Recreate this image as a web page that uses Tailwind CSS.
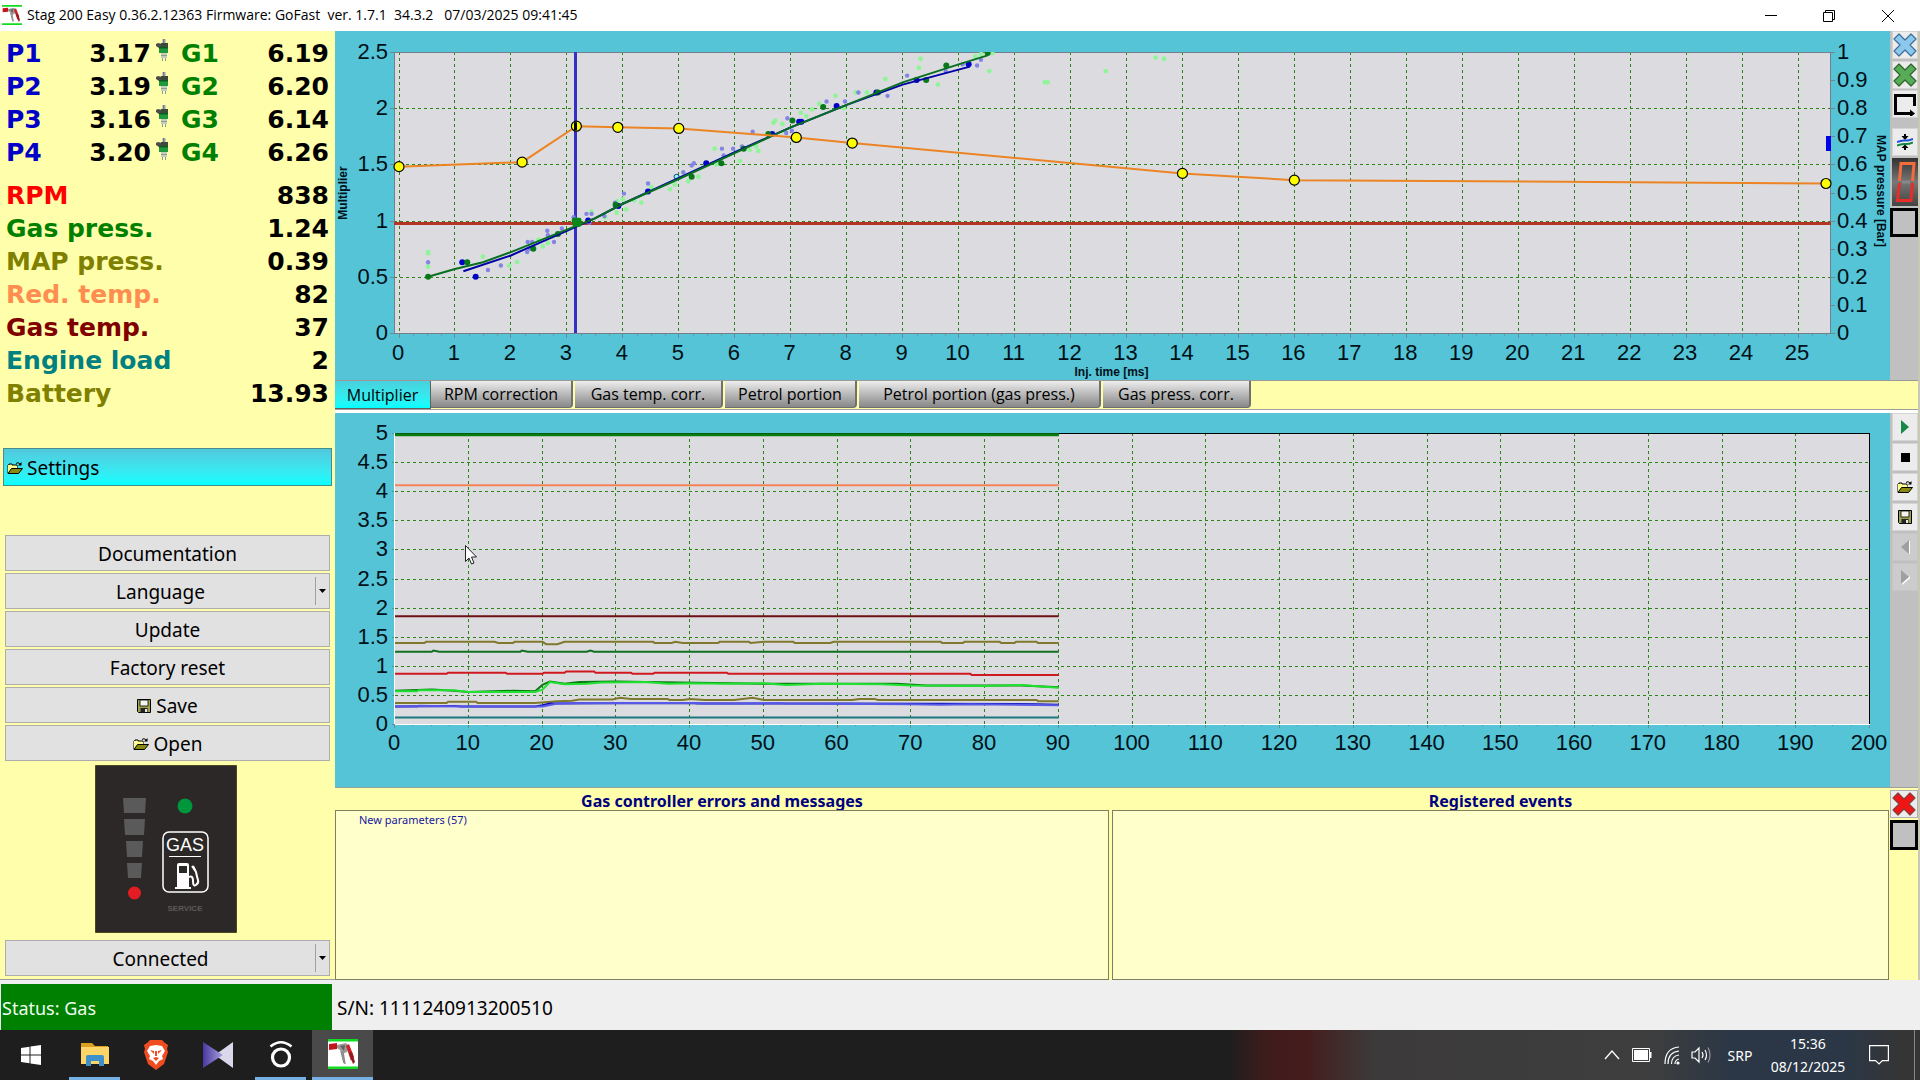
<!DOCTYPE html>
<html lang="en">
<head>
<meta charset="utf-8">
<title>Stag 200 Easy</title>
<script src="https://cdn.jsdelivr.net/npm/@tailwindcss/browser@4"></script>
</head>
<body class="bg-[#ffffab] text-black">

<svg width="0" height="0" class="hidden">
  <symbol id="folder" viewBox="0 0 16 14">
    <path d="M1 12V4h1V3h3v1h5v3" fill="#ffffa0" stroke="#000"/>
    <path d="M1 12V4h4v1h5v2H4z" fill="#ffff90"/>
    <path d="M1 12.5 4.500 7.500H15.500L11.500 12.500Z" fill="#8a8a10" stroke="#000"/>
    <path d="M9 2.500q2-2 4 .5" fill="none" stroke="#000"/><path d="M14.500 1v3.500H11z" fill="#000"/>
  </symbol>
  <symbol id="floppy" viewBox="0 0 14 14">
    <path d="M.5.5h13v13H1.500l-1-1z" fill="#a0a050" stroke="#000"/>
    <path d="M3 1h8v6H3z" fill="#f4f4ec" stroke="#000" stroke-width=".8"/>
    <path d="M3.500 9h7v4.500h-7z" fill="#222"/><path d="M8 10h2v3H8z" fill="#e8e8e8"/>
  </symbol>
  <symbol id="injector" viewBox="0 0 13 22">
    <path d="M6 0h4v5H6z" fill="#c9c9c0"/><path d="M7 0h1.500v4H7z" fill="#777"/>
    <path d="M0 5l2-1 4 1v4H3L0 7z" fill="#4a4a48"/><path d="M5 4h7v4H5z" fill="#3c4a3c"/>
    <path d="M3 8h9v6H3z" fill="#1e9a3c"/><path d="M3 8h9v1.500H3z" fill="#0c5c20"/>
    <path d="M5 14h6v5H5z" fill="#c4ccc4"/><path d="M5 16h6v1H5zM6 19h1v3H6zM9 19h1v3H9z" fill="#8aa08a"/>
  </symbol>
  <symbol id="cross" viewBox="0 0 24 24">
    <path d="M6 1l6 6 6-6 5 5-6 6 6 6-5 5-6-6-6 6-5-5 6-6-6-6z" stroke-width="1.200" stroke-linejoin="round"/>
  </symbol>
  <symbol id="stag" viewBox="0 0 30 30">
    <path d="M0 0h30v30H0z" fill="#fff"/><path d="M0 0h30v2.500H0zM0 27.500h30V30H0z" fill="#12dc22"/>
    <path d="M1 5l8-1v6l-8 1z" fill="#c4141c"/><path d="M9 6l9-2 3 3-2 6-5 2-2-4-3-2z" fill="#9a9a98"/>
    <path d="M12 7l5-1-1 6z" fill="#62625e"/><path d="M15 13l2 12M13 12l3 12" stroke="#8c8c88" stroke-width="1.500"/>
    <path d="M18 7l3-2 5 13-3 4z" fill="#cc2028"/><path d="M21 14l3-1 3 10-2 2z" fill="#8e1c20"/>
  </symbol>
</svg>

<div class="flex min-h-screen flex-col bg-[#ffffab] font-['Noto_Sans','Open_Sans',sans-serif]">

  <header class="flex h-[31px] items-center bg-white">
    <svg class="ml-[2px] mb-[2px] h-5 w-5"><use href="#stag"/></svg>
    <h1 class="mb-[2px] ml-[5px] flex-1 whitespace-pre font-['Open_Sans',sans-serif] text-[14px] leading-5">Stag 200 Easy 0.36.2.12363 Firmware: GoFast  ver. 1.7.1  34.3.2   07/03/2025 09:41:45</h1>
    <button aria-label="Minimize" class="flex h-7 w-[58px] items-center justify-center"><svg width="12" height="12" stroke="#000"><path d="M0 5.500h12"/></svg></button>
    <button aria-label="Restore" class="flex h-7 w-[58px] items-center justify-center"><svg width="12" height="12" fill="none" stroke="#000"><path d="M.5 2.500h9v9h-9zM2.500 2.500v-2h9v9h-2"/></svg></button>
    <button aria-label="Close" class="mr-[2px] flex h-7 w-[60px] items-center justify-center"><svg width="12" height="12" stroke="#000"><path d="M0 0l12 12M12 0L0 12"/></svg></button>
  </header>

  <main class="flex flex-1">
    <aside class="flex w-[335px] shrink-0 flex-col border-b border-[#a0a0a0] pr-1 pl-[3px]">
      <section aria-label="Live readings" class="pt-[6px] pr-[2px] pl-[3px] font-['DejaVu_Sans',sans-serif] text-[25px] leading-[33px] font-bold">
        <div class="grid grid-cols-[145px_30px_1fr]">
          <p class="flex justify-between text-[#0000c8]">P1<span class="text-black">3.17</span></p><svg class="ml-[5px] mt-[2px] h-[22px] w-[13px]"><use href="#injector"/></svg><p class="flex justify-between text-[#008000]">G1<span class="text-black">6.19</span></p>
          <p class="flex justify-between text-[#0000c8]">P2<span class="text-black">3.19</span></p><svg class="ml-[5px] mt-[2px] h-[22px] w-[13px]"><use href="#injector"/></svg><p class="flex justify-between text-[#008000]">G2<span class="text-black">6.20</span></p>
          <p class="flex justify-between text-[#0000c8]">P3<span class="text-black">3.16</span></p><svg class="ml-[5px] mt-[2px] h-[22px] w-[13px]"><use href="#injector"/></svg><p class="flex justify-between text-[#008000]">G3<span class="text-black">6.14</span></p>
          <p class="flex justify-between text-[#0000c8]">P4<span class="text-black">3.20</span></p><svg class="ml-[5px] mt-[2px] h-[22px] w-[13px]"><use href="#injector"/></svg><p class="flex justify-between text-[#008000]">G4<span class="text-black">6.26</span></p>
        </div>
        <div class="mt-[10px]">
          <p class="flex justify-between text-[#ff0000]">RPM<span class="text-black">838</span></p>
          <p class="flex justify-between text-[#008000]">Gas press.<span class="text-black">1.24</span></p>
          <p class="flex justify-between text-[#808000]">MAP press.<span class="text-black">0.39</span></p>
          <p class="flex justify-between text-[#ff8c50]">Red. temp.<span class="text-black">82</span></p>
          <p class="flex justify-between text-[#800000]">Gas temp.<span class="text-black">37</span></p>
          <p class="flex justify-between text-[#008080]">Engine load<span class="text-black">2</span></p>
          <p class="flex justify-between text-[#808000]">Battery<span class="text-black">13.93</span></p>
        </div>
      </section>

      <button class="mt-[38px] flex h-[38px] w-[329px] items-center gap-1 border border-[#4a8a8a] bg-linear-to-b from-[#50c8dc] to-[#00ffff] pt-[2px] pl-[3px] text-[19px]"><svg class="h-[14px] w-4"><use href="#folder"/></svg>Settings</button>

      <div class="mt-[49px] ml-[2px] flex w-[325px] flex-col gap-[2px] text-[19px]">
        <button class="h-9 border border-[#adadad] bg-[#e1e1e1] pt-[2px]">Documentation</button>
        <div class="flex h-9 border border-[#adadad] bg-[#e1e1e1]">
          <button class="flex-1 pt-[2px]">Language</button>
          <button aria-label="Choose language" class="my-[3px] flex w-[14px] items-center justify-center border-l border-[#a0a0a0]"><svg width="7" height="4"><path d="M0 0h7L3.500 4z"/></svg></button>
        </div>
        <button class="h-9 border border-[#adadad] bg-[#e1e1e1] pt-[2px]">Update</button>
        <button class="h-9 border border-[#adadad] bg-[#e1e1e1] pt-[2px]">Factory reset</button>
        <button class="flex h-9 items-center justify-center gap-[5px] border border-[#adadad] bg-[#e1e1e1] pt-[2px]"><svg class="h-[14px] w-[14px]"><use href="#floppy"/></svg>Save</button>
        <button class="flex h-9 items-center justify-center gap-[5px] border border-[#adadad] bg-[#e1e1e1] pt-[2px]"><svg class="h-[14px] w-4"><use href="#folder"/></svg>Open</button>
      </div>

      <svg class="mt-1 ml-[92px] h-[168px] w-[142px]" viewBox="0 0 142 168" role="img" aria-label="Gas switch">
        <path d="M.5.5h141v167H.5z" fill="#2b2827" stroke="#4a4a20"/>
        <path d="M28 33h23l-1 15H29zM29 54h21l-1 16H30zM31 76h17l-1 16H32zM32 98h15l-1 15H33z" fill="#5a5a5a"/>
        <circle cx="90" cy="41" r="7.500" fill="#00963c"/><circle cx="39.500" cy="128" r="6.500" fill="#e41c24"/>
        <rect x="68" y="67" width="45" height="60" rx="6" fill="none" stroke="#fff" stroke-width="1.500"/>
        <text x="90" y="86" text-anchor="middle" font-family="Liberation Sans" font-size="18" fill="#fff">GAS</text>
        <path d="M74 91.500h32" stroke="#fff"/>
        <path d="M82 100q0-2 2-2h8q2 0 2 2v22h2v2H80v-2h2z" fill="#fff"/><path d="M84 101h8v7h-8z" fill="#2b2827"/>
        <path d="M94 112q4-2 4 4t3 4 2-5-2-8l-4-6M98 101l3 6" fill="none" stroke="#fff" stroke-width="2"/>
        <text x="90" y="146" text-anchor="middle" font-family="Liberation Sans" font-size="8" font-weight="bold" fill="#5c5a58">SERVICE</text>
      </svg>

      <div class="mt-[7px] ml-[2px] flex h-9 w-[325px] border border-[#adadad] bg-[#e1e1e1] text-[19px]">
        <button class="flex-1 pt-[2px]">Connected</button>
        <button aria-label="Connection options" class="my-[3px] flex w-[14px] items-center justify-center border-l border-[#a0a0a0]"><svg width="7" height="4"><path d="M0 0h7L3.500 4z"/></svg></button>
      </div>
    </aside>

    <div class="flex min-w-0 flex-1 flex-col border-r-2 border-[#c8c8b4]">
      <div class="flex h-[349px]">
        <svg id="map" class="block h-full min-w-0 flex-1 bg-[#54c4d6]" role="img" aria-label="Multiplier chart"></svg>
        <div class="flex w-7 flex-col items-end bg-[#c0c0c0]">
          <button aria-label="Clear petrol map" class="flex h-7 w-[26px] items-center justify-center border border-[#d4d4d4] bg-[#ececec]"><svg class="h-6 w-6 fill-[#8cc8ec] stroke-[#3c6c9c]"><use href="#cross"/></svg></button>
          <button aria-label="Clear gas map" class="mt-[2px] flex h-7 w-[26px] items-center justify-center border border-[#d4d4d4] bg-[#ececec]"><svg class="h-6 w-6 fill-[#58ac58] stroke-[#2c642c]"><use href="#cross"/></svg></button>
          <button aria-label="Rotate" class="mt-px flex h-7 w-[26px] items-center justify-center border border-[#d4d4d4] bg-[#ececec]"><svg width="24" height="24" fill="none" stroke="#000" stroke-width="3"><path d="M21.500 14V3.500h-19v18H18"/><path d="M17 17.500l5 4-5 4z" fill="#000" stroke="none"/></svg></button>
          <button aria-label="Fit curves" class="mt-[10px] flex h-7 w-[26px] items-center justify-center border border-[#d4d4d4] bg-[#ececec]"><svg width="16" height="16"><path d="M7 0h2v2h2.500L8 6 4.500 2H7zM7 16h2v-2h2.500L8 10.500 4.500 14H7z"/><path d="M0 8q5-2 8-1.500T16 5" fill="none" stroke="#1c50e0" stroke-width="2"/><path d="M0 11.500q5-2 8-1.500t8-1.500" fill="none" stroke="#108840" stroke-width="2"/></svg></button>
          <button aria-label="Digital display" class="mt-[2px] flex h-12 w-[26px] items-center justify-center bg-linear-to-b from-[#333] via-[#777] to-[#444]"><svg width="22" height="42" fill="none" stroke-width="3"><path d="M5.500 20L7 2.500h13L18.500 20" stroke="#f46c3c"/><path d="M5.500 22L3.500 39.500H17L18.500 22" stroke="#e82c28"/><path d="M8 21h8" stroke="#888"/></svg></button>
          <button aria-label="Background colour" class="mt-[2px] h-[29px] w-7 border-3 border-black bg-[#c0c0c0]"></button>
        </div>
      </div>

      <div class="flex h-[33px] flex-col border-t border-[#9a9a9a]">
        <nav class="flex h-[29px] items-start gap-[2px] border-b border-[#a0a0a0] font-['Open_Sans',sans-serif] text-[16px] leading-[26px]" role="tablist">
          <button role="tab" aria-selected="true" class="-mr-[2px] h-7 w-24 border-r border-b border-[#606060] bg-linear-to-b from-[#48d0dc] to-[#00ffff]">Multiplier</button>
          <button role="tab" class="h-[27px] w-[142px] rounded-br-sm border-r-2 border-b border-[#707070] bg-linear-to-b from-[#eeeeee] to-[#888888]">RPM correction</button>
          <button role="tab" class="h-[27px] w-[148px] rounded-br-sm border-r-2 border-b border-[#707070] bg-linear-to-b from-[#eeeeee] to-[#888888]">Gas temp. corr.</button>
          <button role="tab" class="h-[27px] w-[132px] rounded-br-sm border-r-2 border-b border-[#707070] bg-linear-to-b from-[#eeeeee] to-[#888888]">Petrol portion</button>
          <button role="tab" class="h-[27px] w-[242px] rounded-br-sm border-r-2 border-b border-[#707070] bg-linear-to-b from-[#eeeeee] to-[#888888]">Petrol portion (gas press.)</button>
          <button role="tab" class="h-[27px] w-[148px] rounded-br-sm border-r-2 border-b border-[#707070] bg-linear-to-b from-[#eeeeee] to-[#888888]">Gas press. corr.</button>
        </nav>
        <div class="h-[3px] bg-white"></div>
      </div>

      <div class="flex h-[375px]">
        <div class="relative min-w-0 flex-1">
          <svg id="scope" class="block h-full w-full bg-[#54c4d6]" role="img" aria-label="Oscilloscope"></svg>
          <svg class="absolute top-[132px] left-[130px]" width="13" height="20"><path d="M.5.5v16l3.500-3.500 2.500 6 2.500-1-2.500-6h5z" fill="#fff" stroke="#222"/></svg>
        </div>
        <div class="flex w-7 flex-col items-end gap-[2px] border-b border-[#a0a0a0] bg-[#c0c0c0]">
          <button aria-label="Record" class="flex h-7 w-[26px] items-center justify-center border border-[#d4d4d4] bg-[#ececec]"><svg width="8" height="14"><path d="M0 0l8 7-8 7z" fill="#188848"/></svg></button>
          <button aria-label="Stop" class="flex h-7 w-[26px] items-center justify-center border border-[#d4d4d4] bg-[#ececec]"><svg width="9" height="9"><path d="M0 0h9v9H0z"/></svg></button>
          <button aria-label="Open recording" class="flex h-7 w-[26px] items-center justify-center border border-[#d4d4d4] bg-[#ececec]"><svg class="h-[14px] w-4"><use href="#folder"/></svg></button>
          <button aria-label="Save recording" class="flex h-7 w-[26px] items-center justify-center border border-[#d4d4d4] bg-[#ececec]"><svg class="h-[14px] w-[14px]"><use href="#floppy"/></svg></button>
          <button aria-label="Previous" disabled class="flex h-7 w-[26px] items-center justify-center border border-[#c6c6c6] bg-[#cccccc]"><svg width="9" height="15"><path d="M8.500 1v13" stroke="#fff"/><path d="M8 0L0 7l8 7z" fill="#a0a0a0"/></svg></button>
          <button aria-label="Next" disabled class="flex h-7 w-[26px] items-center justify-center border border-[#c6c6c6] bg-[#cccccc]"><svg width="9" height="15"><path d="M1 14l8-7" stroke="#fff" stroke-width="2"/><path d="M0 0l8 7-8 7z" fill="#a0a0a0"/></svg></button>
        </div>
      </div>

      <div class="flex flex-1 gap-px">
        <div class="grid flex-1 grid-cols-[774fr_777fr] grid-rows-[22px_1fr] gap-x-[3px] text-center font-bold text-[#000080]">
          <h2 class="text-[16px] leading-[26px]">Gas controller errors and messages</h2>
          <h2 class="text-[16px] leading-[26px]">Registered events</h2>
          <div class="border border-[#808060] bg-[#ffffcc] px-[23px] py-[2px] text-left text-[11px] leading-[14px] font-normal text-[#1818a0]">New parameters (57)</div>
          <div class="border border-[#808060] bg-[#ffffcc]"></div>
        </div>
        <div class="w-7">
          <button aria-label="Clear errors" class="mt-[2px] flex h-7 w-7 items-center justify-center border border-[#b0b0b0] bg-[#ececec]"><svg class="h-6 w-6 fill-[#f01414] stroke-[#804040]"><use href="#cross"/></svg></button>
          <button aria-label="Panel colour" class="mt-[2px] block h-[30px] w-7 border-3 border-black bg-[#c0c0c0]"></button>
        </div>
      </div>
    </div>
  </main>

  <footer class="flex h-[50px] items-center bg-[#efefef] text-[19px]">
    <div class="mt-[3px] ml-px flex h-[46px] w-[331px] items-center bg-[#008000] pt-[3px] pl-px text-[18px] text-[#f0fff0]">Status: Gas</div>
    <p class="mt-[6px] ml-[5px]">S/N: 1111240913200510</p>
  </footer>

  <nav aria-label="Taskbar" class="flex h-[50px] bg-[#1e1e1e] bg-[linear-gradient(to_right,#1e1e1e_64%,#3f1c1c_66%,#451c1c_68%,#3c3a3a_71.5%,#3e3e3e_86%,#2b3745_90%,#2b3747_96%,#353535_99%)] text-white">
    <button aria-label="Start" class="flex w-[61px] items-center justify-center"><svg width="20" height="20" fill="#fff"><path d="M0 3l8.500-1.200V9.500H0zM9.500 1.600L20 0v9.500H9.500zM0 10.500h8.500v7.700L0 17zM9.500 10.500H20V20L9.500 18.400z"/></svg></button>
    <button aria-label="File Explorer" class="ml-2 flex w-[51px] items-center justify-center border-b-3 border-[#76b0e4]"><svg width="28" height="24"><path d="M0 1h11l3 3h13v18H0z" fill="#dca020"/><path d="M0 5h28v17H0z" fill="#fcd468"/><path d="M5 24V15q0-2 2-2h14q2 0 2 2v9h-5v-5h-8v5z" fill="#3c90cc"/></svg></button>
    <button aria-label="Brave" class="ml-[10px] flex w-[52px] items-center justify-center"><svg width="26" height="30"><path d="M7 0h12l3 3 3 2-1 4 1 3-4 12-8 6-8-6L1 12l1-3-1-4 3-2z" fill="#f04c20"/><path d="M13 5l6 1 3 5-3 5 1 3-4 2-3 4-3-4-4-2 1-3-3-5 3-5z" fill="#fff"/><path d="M7 10l4 1v3zM19 10l-4 1v3zM10 18l3-1 3 1-3 3zM12 11h2v5h-2z" fill="#f04c20"/></svg></button>
    <button aria-label="Media player" class="ml-[10px] flex w-[52px] items-center justify-center"><svg width="30" height="26"><defs><linearGradient id="kml"><stop stop-color="#4838a0"/><stop offset="1" stop-color="#a8a0dc"/></linearGradient></defs><path d="M30 0v26L12 13z" fill="#dcd8ec"/><path d="M0 0l20 13L0 26z" fill="url(#kml)"/></svg></button>
    <button aria-label="Hotspot" class="ml-[11px] flex w-[51px] items-center justify-center border-b-3 border-[#76b0e4]"><svg width="24" height="28" fill="none" stroke="#fff" stroke-width="3.200"><circle cx="12" cy="17.500" r="8.500"/><path d="M1.500 6.500q10.500-8.500 21 0" stroke-width="2.600"/></svg></button>
    <button aria-label="Stag" class="ml-[6px] flex w-[61px] items-center justify-center border-b-3 border-[#76b0e4] bg-[#4a4a4a]"><svg class="h-[30px] w-[30px]"><use href="#stag"/></svg></button>
    <div class="ml-auto mr-[5px] flex items-center border-r border-[#888] text-[15px] leading-[23px]">
      <button aria-label="Hidden icons" class="flex w-[30px] justify-center"><svg width="16" height="12" fill="none" stroke="#fff" stroke-width="1.300"><path d="M1 10l7-8 7 8"/></svg></button>
      <svg class="mx-[5px]" width="20" height="14"><path d="M.5.5h17v13H.5z" fill="none" stroke="#fff"/><path d="M2 2h14v10H2zM18 4h1.500v6H18z" fill="#fff"/></svg>
      <svg class="mx-[7px]" width="16" height="20" fill="none" stroke="#fff" stroke-width="1.200"><path d="M1 19Q1 3 15 2M4 19Q4 7 15 6M7.500 19q0-8 7.500-9M11 19q0-4 4-5"/><circle cx="14" cy="18" r="1" fill="#fff"/></svg>
      <svg class="mx-1" width="20" height="20" fill="none" stroke="#fff" stroke-width="1.200"><path d="M1 7h3l4-4v14l-4-4H1zM11 7q2 3 0 6M14 5q3 5 0 10"/><path d="M17 2.500q4 7.500 0 15" stroke="#999"/></svg>
      <button class="w-[50px] text-center text-[14px]">SRP</button>
      <time datetime="2025-12-08T15:36" class="mb-[2px] w-[86px] pt-[2px] text-center text-[14px]">15:36<br>08/12/2025</time>
      <button aria-label="Notifications" class="mr-[7px] flex w-14 justify-center"><svg width="20" height="20" fill="none" stroke="#fff" stroke-width="1.200"><path d="M.6.6h18.800v15h-6L10 19l-3.400-3.400h-6z"/></svg></button>
    </div>
  </nav>
</div>

<script>
const FONT = 'font-family="Liberation Sans, Arial, sans-serif"';
const line = (x1, y1, x2, y2, c, w = 1, extra = '') =>
  `<path d="M${x1} ${y1}L${x2} ${y2}" stroke="${c}" stroke-width="${w}" fill="none" ${extra}/>`;
const label = (x, y, t, anchor = 'middle') =>
  `<text x="${x}" y="${y}" ${FONT} font-size="22" text-anchor="${anchor}" fill="#001018">${t}</text>`;
const title = (x, y, t, rot) =>
  `<text transform="translate(${x} ${y}) rotate(${rot})" ${FONT} font-size="12" font-weight="bold" text-anchor="middle" fill="#001018">${t}</text>`;
const half = v => Math.round(v) + .5;
const DASH = 'stroke-dasharray="3 3"', GRID = '#2c8418';
const poly = (pts, X, Y, c, w = 2) =>
  `<polyline points="${pts.map(p => X(p[0]) + ',' + Y(p[1])).join(' ')}" fill="none" stroke="${c}" stroke-width="${w}"/>`;

// injection-time map
const curve = [[0,1.48],[2.2,1.52],[3.17,1.84],[3.91,1.83],[5,1.82],[7.1,1.74],[8.1,1.69],[14,1.42],[16,1.36],[25.5,1.33]];
const gasFit = [[.52,.5],[1,.57],[1.5,.63],[2,.72],[2.5,.82],[3,.92],[3.5,1.02],[4,1.15],[5,1.37],[6,1.6],[7,1.83],[8,2.03],[9,2.23],[10,2.39],[10.52,2.47]];
const petrolFit = [[1.15,.55],[2,.69],[2.5,.8],[3,.91],[3.5,1.02],[4,1.15],[5,1.38],[6,1.61],[7,1.83],[8,2.03],[9,2.21],[10.2,2.37]];
const gasRaw = [[.52,.72],[.52,.71],[.52,.59],[1.5,.68],[1.97,.6],[2.11,.63],[2.34,.77],[2.49,.83],[2.57,.77],[2.66,.8],[2.75,.86],[3.89,1.07],[3.9,1.17],[3.44,1.08],[3.68,1.03],[4.06,1.1],[4,1.19],[4.33,1.16],[4.2,1.18],[4.51,1.3],[4.84,1.28],[4.93,1.32],[5.35,1.39],[5.17,1.35],[5.64,1.64],[5.67,1.5],[6.09,1.53],[6.27,1.63],[6.42,1.62],[6.38,1.66],[6.69,1.87],[6.72,1.89],[6.85,1.86],[6.9,1.79],[7.18,1.96],[7.28,1.93],[7.38,1.99],[7.51,2.04],[7.8,2.11],[7.95,2],[8.16,2.14],[8.36,2.14],[8.69,2.26],[9.29,2.36],[9.32,2.44],[9.63,2.21],[10.55,2.33],[10.3,2.46],[10.4,2.48],[10.6,2.49],[11.54,2.23],[11.59,2.23],[12.63,2.33],[13.52,2.45],[13.67,2.44]];
const petrolRaw = [[.52,.63],[1.59,.56],[1.82,.6],[2.3,.81],[2.38,.81],[2.29,.72],[2.33,.75],[2.65,.91],[2.66,.87],[2.77,.81],[2.91,.93],[3.12,1.03],[3.35,1.06],[3.44,1.06],[3.4,.98],[3.67,1.04],[3.86,1.16],[4.02,1.24],[4.45,1.33],[5.08,1.43],[5.23,1.49],[5.27,1.51],[5.77,1.64],[5.8,1.58],[5.97,1.64],[6.13,1.66],[6.32,1.79],[6.94,1.91],[6.92,1.78],[7.02,1.8],[7.64,2.06],[7.97,2.06],[8.21,2.14],[8.73,2.11],[9.08,2.29],[9.77,2.33],[10.07,2.39],[10.33,2.38],[10.4,2.43]];
const gasAvg = [[.52,.5],[1.22,.63],[2.4,.75],[2.84,.88],[3.14,1],[3.87,1.14],[5.23,1.39],[5.76,1.51],[6.16,1.64],[6.6,1.77],[7.03,1.89],[7.58,2.01],[8.56,2.14],[9.42,2.25],[9.78,2.38],[10.52,2.49]];
const petrolAvg = [[1.13,.63],[1.37,.5],[3.38,1],[3.92,1.13],[4.45,1.26],[5.49,1.51],[6.67,1.77],[7.15,1.88],[7.19,1.88],[7.82,2.02],[8.53,2.14],[9.25,2.25],[10.18,2.39]];

function drawMap() {
  const el = document.getElementById('map'), W = el.clientWidth;
  const L = 59, R = W - 59, T = 21, B = 302, x0 = L + 5, u = (R - 5 - x0) / 25.5;
  const X = v => x0 + v * u, Y = v => B - v / 2.5 * (B - T);
  const now = Math.round(X(3.17)) - .5;
  let s = `<clipPath id="plot"><rect x="${L}" y="${T}" width="${R - L}" height="${B - T}"/></clipPath>`;
  s += `<rect x="${L}" y="${T}" width="${R - L}" height="${B - T}" fill="#dcdce0"/>`;
  for (let i = 0; i <= 25; i++) {
    s += line(half(X(i) - .5), T, half(X(i) - .5), B, GRID, 1, DASH) + line(half(X(i) - .5), B, half(X(i) - .5), B + 5, '#708890');
    for (let k = 1; k < 4 && i + k / 4 <= 25.5; k++) s += line(half(X(i + k / 4)), B, half(X(i + k / 4)), B + 3, '#7098a4');
    s += label(X(i) - 1, B + 27, i);
  }
  for (let v = 0; v <= 2.5; v += .5) {
    const y = half(Y(v));
    if (v > 0 && v < 2.5) s += line(L, y, R, y, GRID, 1, DASH);
    s += line(L - 4, y, L, y, '#708890') + label(L - 6, y + 6, v, 'end');
  }
  for (let k = 0; k <= 10; k++) {
    const y = B - k / 10 * (B - T);
    s += line(R, half(y), R + 4, half(y), '#708890') + label(R + 6, half(y) + 6, k / 10, 'start');
  }
  s += `<rect x="${L + .5}" y="${T + .5}" width="${R - L - 1}" height="${B - T}" fill="none" stroke="#70808c"/>`;
  s += line(L, 192.5, R, 192.5, '#b43428', 3) + line(now, T, now, B, '#3430c4', 3);
  const dot = (c, r) => p => `<circle cx="${X(p[0])}" cy="${Y(p[1])}" r="${r}" fill="${c}"/>`;
  s += '<g clip-path="url(#plot)">';
  s += gasRaw.map(dot('#90f498', 2.4)).join('') + petrolRaw.map(dot('#8484e4', 2.2)).join('');
  s += petrolAvg.map(dot('#0000c8', 3)).join('') + gasAvg.map(dot('#087818', 3)).join('');
  s += `<circle cx="${X(4.96)}" cy="${Y(1.39)}" r="2.500" fill="#a0f0f0" stroke="#005080"/>`;
  s += poly(petrolFit, X, Y, '#0000a8') + poly(gasFit, X, Y, '#087020') + '</g>';
  s += poly(curve, X, Y, '#ec8424');
  s += `<rect x="${X(3.18) - 4.5}" y="${Y(.99) - 4}" width="9" height="9" rx="2" fill="#088818"/>`;
  s += curve.map(p => `<circle cx="${X(p[0])}" cy="${Y(p[1])}" r="5" fill="#ffff00" stroke="#000" stroke-width="1.200"/>`).join('');
  s += line(now, Y(1.84) - 4, now, Y(1.84) + 4, '#000', 3);
  s += `<rect x="${R - 5}" y="105" width="5" height="15" fill="#0000e8"/>`;
  s += title(12, 162, 'Multiplier', -90) + title(W - 13, 160, 'MAP pressure [Bar]', 90) + title((L + R) / 2 - 1, 345, 'Inj. time [ms]', 0);
  el.innerHTML = s;
}

// oscilloscope traces, as [time, value]
const traces = [
  ['#087c10', 3, [[0,4.98],[90,4.98]]],
  ['#f48458', 2, [[0,4.11],[90,4.11]]],
  ['#6c1014', 2, [[0,1.86],[90,1.86]]],
  ['#80782c', 2, [[0,1.4],[4,1.4],[4.2,1.42],[13.500,1.42],[14,1.4],[16,1.4],[16.200,1.42],[20,1.42],[20.500,1.38],[22,1.38],[23,1.42],[35,1.42],[35.200,1.4],[37.500,1.4],[38,1.42],[39,1.4],[43.800,1.4],[44,1.42],[48,1.42],[48.200,1.4],[50,1.42],[54,1.42],[54.200,1.4],[59,1.4],[59.500,1.42],[74,1.42],[74.200,1.4],[77,1.4],[77.200,1.42],[82,1.42],[82.200,1.4],[84,1.4],[84.200,1.42],[87,1.42],[87.200,1.4],[90,1.4]]],
  ['#107020', 2, [[0,1.25],[5,1.25],[5.200,1.27],[6,1.25],[17,1.25],[17.200,1.27],[18,1.25],[26,1.25],[26.500,1.27],[27,1.25],[90,1.25]]],
  ['#d01820', 2, [[0,.87],[7,.87],[7.200,.89],[15,.89],[15.200,.87],[20,.87],[20.200,.89],[23,.89],[23.200,.91],[27,.91],[27.200,.89],[32,.89],[32.200,.87],[35,.87],[35.200,.89],[45,.89],[45.200,.87],[78,.87],[78.200,.85],[90,.85]]],
  ['#087c10', 2, [[0,.58],[5,.6],[8,.58],[10,.56],[16,.58],[19,.57],[20,.68],[21,.74],[23,.7],[25,.73],[30,.74],[34,.73],[50,.7],[68,.7],[72,.67],[85,.67],[90,.64]]],
  ['#20e030', 2, [[0,.57],[3,.57],[3.200,.59],[8,.59],[10,.56],[16,.56],[19,.56],[20,.6],[21,.73],[23,.69],[26,.7],[28,.72],[34,.73],[37,.7],[40,.71],[45,.7],[50,.71],[53,.68],[58,.7],[66,.69],[70,.67],[80,.66],[85,.68],[88,.65],[90,.63]]],
  ['#80782c', 2, [[0,.37],[7,.37],[7.200,.39],[11,.39],[11.200,.37],[19,.37],[22,.4],[24,.41],[25,.43],[29.500,.43],[30.500,.46],[32,.44],[37,.44],[37.200,.42],[39,.42],[40,.44],[42,.42],[46,.42],[48.500,.46],[50,.42],[62,.42],[63,.44],[65,.44],[65.500,.42],[87,.42],[87.200,.4],[90,.4]]],
  ['#1010b8', 2, [[0,.31],[8,.32],[9,.31],[19,.31],[20,.33],[21,.36],[40,.37],[41,.36],[60,.36],[87,.35],[90,.34]]],
  ['#5858e8', 2, [[0,.31],[3,.31],[3.200,.32],[9,.31],[19,.31],[20,.31],[22,.36],[25,.37],[41,.37],[42,.36],[46,.36],[52,.37],[53,.36],[70,.35],[74,.34],[78,.35],[90,.33]]],
  ['#187880', 2, [[0,.12],[90,.12]]]
];

function drawScope() {
  const el = document.getElementById('scope'), W = el.clientWidth;
  const L = 60, R = W - 20, T = 20, B = 311;
  const X = v => L + v / 200 * (R - L), Y = v => B + .5 - v / 5 * (B - T);
  let s = `<rect x="${L}" y="${T}" width="${R - L}" height="${B - T}" fill="#dcdce0"/>`;
  for (let i = 0; i <= 200; i += 10) {
    if (i && i < 200) s += line(half(X(i) - 1), T, half(X(i) - 1), B, GRID, 1, DASH);
    for (let k = 0; k < 4 && i + k * 2.5 <= 200; k++) s += line(half(X(i + k * 2.5) - 1), B, half(X(i + k * 2.5) - 1), B + (k ? 2 : 4), '#5c9098');
    s += label(X(i) - 1, B + 26, i);
  }
  for (let v = 0; v <= 5; v += .5) {
    const y = half(Y(v) - .5);
    if (v > 0 && v < 5) s += line(L, y, R, y, GRID, 1, DASH);
    s += line(L - 3, y, L, y, '#5c9098') + label(L - 7, y + 6, v, 'end');
  }
  s += line(L, T + .5, R, T + .5, '#000') + line(R - .5, T, R - .5, B, '#000');
  s += line(L - .5, T, L - .5, B, '#fff') + line(L, B + .5, R, B + .5, '#fff');
  s += traces.map(t => poly(t[2], X, Y, t[0], t[1])).join('');
  s += line(0, 374.5, W, 374.5, '#90a0a0');
  el.innerHTML = s;
}

// redraw whenever a chart's own width changes
const watch = (id, draw) => new ResizeObserver(draw).observe(document.getElementById(id));
drawMap();
drawScope();
watch('map', drawMap);
watch('scope', drawScope);
</script>
</body>
</html>
